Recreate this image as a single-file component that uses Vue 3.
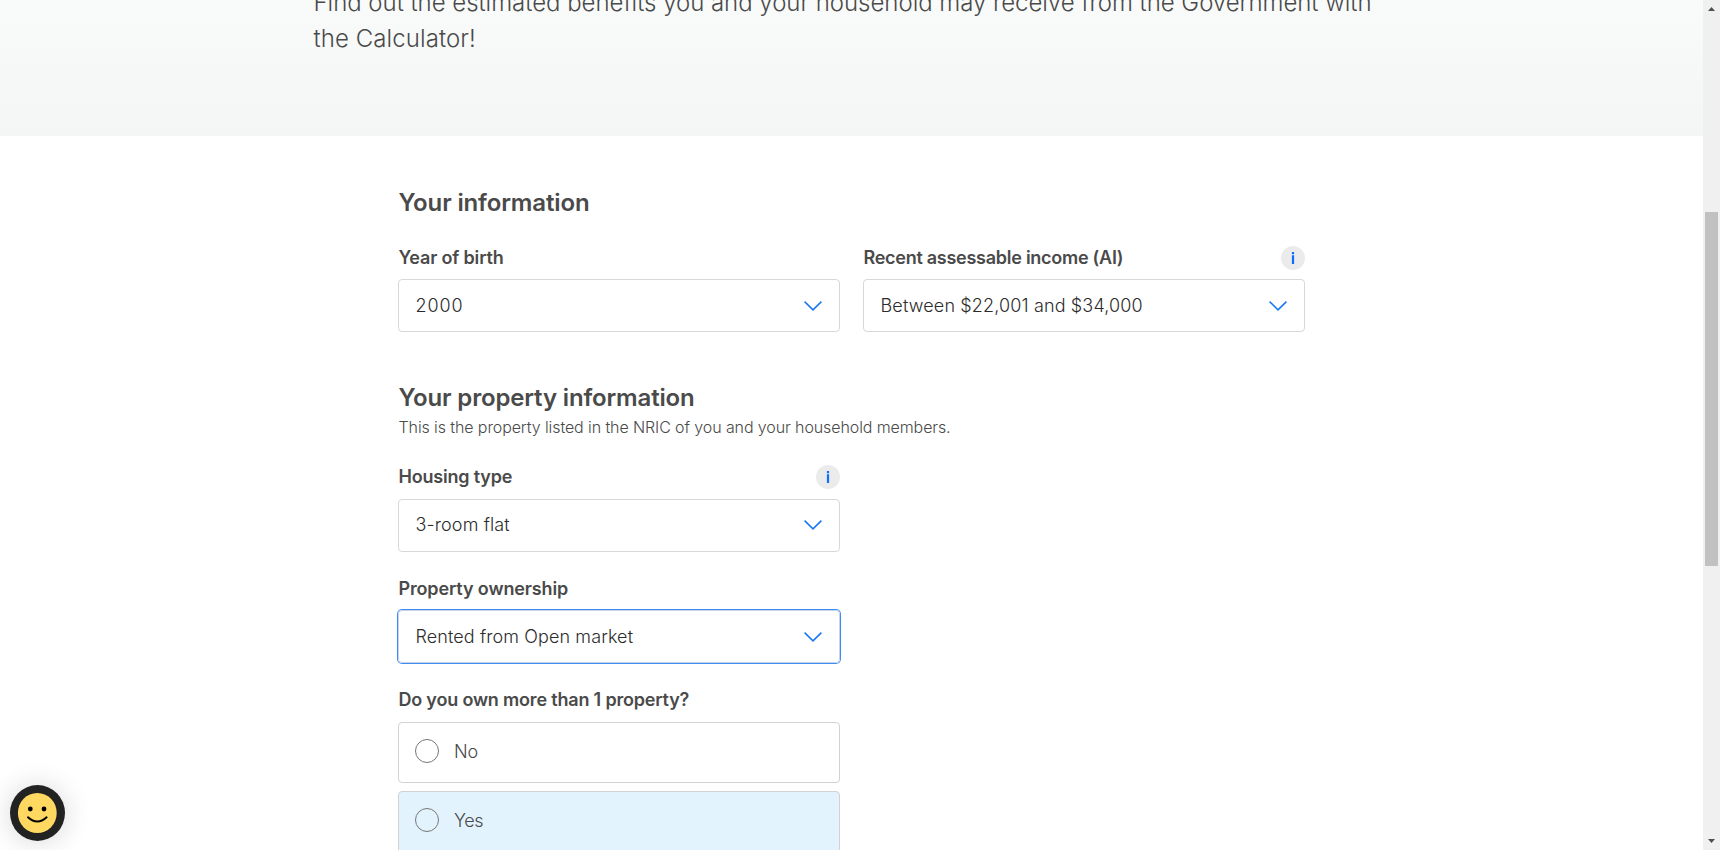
<script setup>
const birth = '2000'
const income = 'Between $22,001 and $34,000'
</script>

<template>
  <div class="page">
    <div class="content">
      <header class="hero">
        <p><span class="lead">Find out the estimated benefits you and your household may receive from the Government with</span><br><span class="lead-end">the Calculator!</span></p>
      </header>

      <main class="form">
        <h2 class="t-info">Your information</h2>
        <div class="grid">
          <div class="field">
            <div class="label"><span class="t-birth">Year of birth</span></div>
            <div class="select">
              <span class="t-year">{{ birth }}</span>
              <svg class="chev" viewBox="0 0 18 10"><path d="M.6.6 9 8.9 17.4.6" /></svg>
            </div>
          </div>
          <div class="field">
            <div class="label">
              <span class="t-income">Recent assessable income (AI)</span>
              <svg class="info" viewBox="0 0 24 24"><circle cx="12" cy="12" r="12" /><path d="M10.9 6h2.2v2.2h-2.2zM10.9 9.2h2.2v8.8h-2.2z" /></svg>
            </div>
            <div class="select">
              <span class="t-range">{{ income }}</span>
              <svg class="chev" viewBox="0 0 18 10"><path d="M.6.6 9 8.9 17.4.6" /></svg>
            </div>
          </div>
        </div>

        <h2 class="second t-prop">Your property information</h2>
        <p class="note">This is the property listed in the NRIC of you and your household members.</p>

        <div class="column">
          <div class="field housing">
            <div class="label">
              <span class="t-housing">Housing type</span>
              <svg class="info" viewBox="0 0 24 24"><circle cx="12" cy="12" r="12" /><path d="M10.9 6h2.2v2.2h-2.2zM10.9 9.2h2.2v8.8h-2.2z" /></svg>
            </div>
            <div class="select raised">
              <span class="t-flat">3-room flat</span>
              <svg class="chev" viewBox="0 0 18 10"><path d="M.6.6 9 8.9 17.4.6" /></svg>
            </div>
          </div>
          <div class="field">
            <div class="label"><span class="t-owner">Property ownership</span></div>
            <div class="select focused">
              <span class="t-rent">Rented from Open market</span>
              <svg class="chev" viewBox="0 0 18 10"><path d="M.6.6 9 8.9 17.4.6" /></svg>
            </div>
          </div>
          <div class="field choices">
            <div class="label"><span class="t-more">Do you own more than 1 property?</span></div>
            <div class="option"><i class="radio"></i><span class="t-no">No</span></div>
            <div class="option hovered"><i class="radio"></i><span class="t-yes">Yes</span></div>
          </div>
        </div>
      </main>
    </div>

    <div class="scrollbar">
      <svg class="arrow" viewBox="0 0 17 17"><path d="M5 11 8.5 7 12 11z" /></svg>
      <div class="thumb"></div>
      <svg class="arrow down" viewBox="0 0 17 17"><path d="M5 6 8.5 10 12 6z" /></svg>
    </div>

    <div class="chat">
      <svg viewBox="0 0 55 56">
        <ellipse cx="27.5" cy="28" rx="27.5" ry="28" fill="#222" />
        <ellipse cx="27.3" cy="28" rx="19.4" ry="20" fill="#ffd862" />
        <circle cx="20.3" cy="24" r="2.4" />
        <circle cx="34" cy="24" r="2.4" />
        <path d="M18 32.3q9.3 8.4 18.6 0" fill="none" stroke="#000" stroke-width="2" stroke-linecap="round" />
      </svg>
    </div>
  </div>
</template>

<style>
body { background: #fff; overflow: hidden; }
</style>

<style scoped>
.page {
  position: relative;
  display: flex;
  height: 850px;
  overflow: hidden;
  background: #fff;
  font-family: Inter, "Liberation Sans", sans-serif;
  font-weight: 340;
  color: #4a4a4a;
}
.page * { box-sizing: border-box; }
.content { flex: 1; height: 850px; overflow: hidden; }
.hero {
  height: 136px;
  padding-left: 313.5px;
  overflow: hidden;
  background: linear-gradient(#f9fbfa, #f4f6f6);
}
.hero p { margin: -15px 0 0; font-size: 24px; line-height: 36px; white-space: nowrap; }
.lead { letter-spacing: -.038px; }
.lead-end { letter-spacing: .08px; }
.form { width: 907px; margin-left: 398px; padding-top: 49px; }
h2 { margin: 0; padding-left: .5px; font-size: 24px; line-height: 36px; font-weight: 600; }
h2.second { margin-top: 48px; }
.grid { display: grid; grid-template-columns: 442px 442px; gap: 23px; margin-top: 25px; }
.column { width: 442px; margin-top: 26px; }
.field + .field { margin-top: 25px; }
.grid .field + .field { margin-top: 0; }
.label {
  display: flex;
  justify-content: space-between;
  height: 33px;
  padding-left: .4px;
  font-size: 18px;
  line-height: 23px;
  font-weight: 600;
}
.housing .label { height: 34px; }
.choices .label { height: 34px; }
.info { width: 24px; height: 24px; }
.info circle { fill: #ebebeb; }
.info path { fill: #0d6ff7; }
.select {
  display: flex;
  align-items: center;
  justify-content: space-between;
  height: 53px;
  padding: 0 17px 0 16.5px;
  border: 1px solid #d6d8d9;
  border-radius: 4px;
  font-size: 18px;
  color: #2c2c2c;
}
.raised { padding-bottom: 2px; }
.focused { border-color: #c4d3e6; box-shadow: 0 0 0 1px #418cf2; }
.chev { width: 18px; height: 10px; }
.chev path { fill: none; stroke: #1877f2; stroke-width: 1.5; }
.note { margin: -1px 0 0; padding-left: .5px; font-size: 16px; line-height: 24px; letter-spacing: -.1px; }
.option {
  display: flex;
  gap: 15px;
  height: 61px;
  padding: 16px;
  border: 1px solid #cfd3d5;
  border-radius: 4px;
  font-size: 18px;
  line-height: 26px;
}
.hovered { height: 62px; margin-top: 8px; background: #e2f3fe; }
.radio { width: 24px; height: 24px; border: 1px solid #777; border-radius: 50%; }
.t-info { letter-spacing: -.14px; }
.t-prop { letter-spacing: -.16px; }
.t-birth { letter-spacing: -.16px; }
.t-income { letter-spacing: -.26px; }
.t-housing { letter-spacing: -.18px; }
.t-owner { letter-spacing: -.12px; }
.t-more { letter-spacing: -.18px; }
.t-year { letter-spacing: .9px; }
.t-range { letter-spacing: .14px; }
.t-flat { letter-spacing: .12px; }
.t-rent { letter-spacing: .1px; }
.t-no { letter-spacing: -.2px; }
.t-yes { letter-spacing: -.4px; }
.scrollbar {
  display: flex;
  flex-direction: column;
  align-items: center;
  width: 17px;
  height: 850px;
  background: #f0f0f0;
}
.arrow { width: 17px; height: 17px; fill: #505050; }
.thumb { width: 13px; height: 354px; margin-top: 195px; background: #c1c1c1; }
.down { margin-top: auto; }
.chat {
  position: absolute;
  left: 10px;
  top: 785px;
  width: 55px;
  height: 56px;
  border-radius: 50%;
  box-shadow: 0 1px 28px rgba(0, 0, 0, .16);
}
.chat svg { display: block; width: 55px; height: 56px; }
</style>
